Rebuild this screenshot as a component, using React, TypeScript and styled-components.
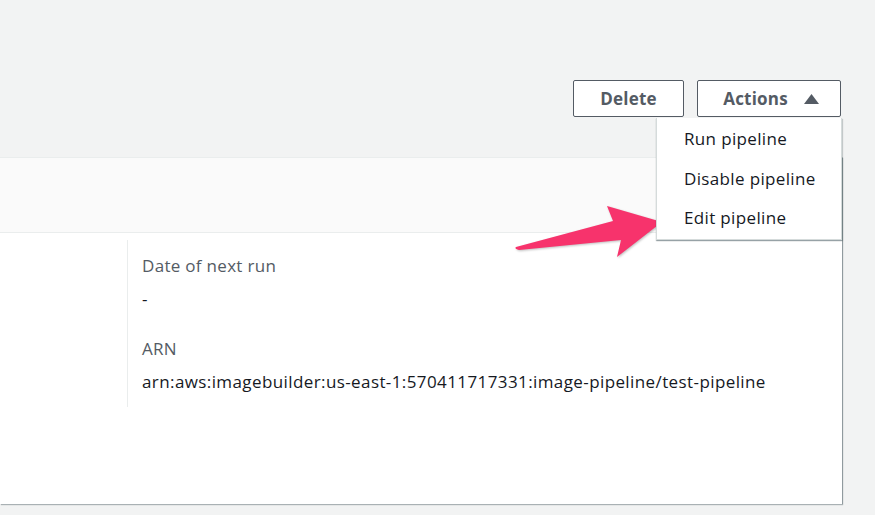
import React, { useState } from 'react';
import styled, { createGlobalStyle } from 'styled-components';

const GlobalStyle = createGlobalStyle`
  html, body {
    margin: 0;
    padding: 0;
    background: #f2f3f3;
    font-family: "Open Sans", "Noto Sans", Arial, sans-serif;
    color: #16191f;
    overflow: hidden;
  }
`;

const Page = styled.div`
  width: 875px;
  height: 515px;
  position: relative;
`;

const Toolbar = styled.div`
  height: 157px;
  display: flex;
  justify-content: flex-end;
  align-items: flex-start;
  gap: 13px;
  padding: 80px 34px 0 0;
  box-sizing: border-box;
`;

const Button = styled.button<{ $width: number; $shift?: number }>`
  height: 37px;
  width: ${(p) => p.$width}px;
  padding: 0 0 0 ${(p) => p.$shift ?? 0}px;
  display: flex;
  align-items: center;
  justify-content: center;
  gap: 16px;
  background: #ffffff;
  border: 1px solid #545b64;
  border-radius: 2px;
  color: #545b64;
  font-family: "Open Sans", "Noto Sans", Arial, sans-serif;
  font-size: 17px;
  font-weight: 700;
  letter-spacing: 0.2px;
  cursor: pointer;
`;

const ActionsWrap = styled.div`
  position: relative;
`;

const Caret = styled.svg`
  width: 15px;
  height: 10px;
  fill: #545b64;
`;

const Menu = styled.ul`
  position: absolute;
  top: 38px;
  right: -1px;
  width: 186px;
  box-sizing: border-box;
  margin: 0;
  padding: 1px 0 1px;
  list-style: none;
  background: #ffffff;
  border: 1px solid #d5dbdb;
  border-top: none;
  box-shadow: 0 1px 1px 0 rgba(0, 28, 36, 0.3), 1px 1px 1px 0 rgba(0, 28, 36, 0.15);
  z-index: 5;
`;

const MenuItem = styled.li`
  height: 39.5px;
  display: flex;
  align-items: center;
  padding-left: 27px;
  font-size: 17px;
  letter-spacing: 0.35px;
  color: #16191f;
  cursor: pointer;
`;

const Card = styled.section`
  margin-right: 33px;
  background: #ffffff;
  box-shadow: 1px 1px 1px 0 rgba(0, 28, 36, 0.3), 1px 0 0 0 rgba(0, 28, 36, 0.15);
`;

const CardHeader = styled.div`
  height: 76px;
  background: #fafafa;
  border-top: 1px solid #eaeded;
  border-bottom: 1px solid #eaeded;
  box-sizing: border-box;
`;

const CardBody = styled.div`
  display: grid;
  grid-template-columns: 127px 1fr;
  padding: 7px 0 97px;
  height: 271px;
  box-sizing: border-box;
`;

const Column = styled.div<{ $divider?: boolean }>`
  border-left: ${(p) => (p.$divider ? '1px solid #eaeded' : 'none')};
  padding: 14px 0 0 14px;
  display: flex;
  flex-direction: column;
  gap: 26px;
`;

const Field = styled.div`
  display: flex;
  flex-direction: column;
  gap: 9px;
`;

const Label = styled.div`
  font-size: 17px;
  line-height: 24px;
  letter-spacing: 0.3px;
  color: #545b64;
`;

const Value = styled.div`
  font-size: 17px;
  line-height: 24px;
  letter-spacing: 0.4px;
  color: #16191f;
  white-space: nowrap;
`;

const Arrow = styled.svg`
  position: absolute;
  left: 505px;
  top: 195px;
  width: 170px;
  height: 75px;
  pointer-events: none;
  filter: drop-shadow(1px 1px 1px rgba(0, 0, 0, 0.25));
`;

const fields = [
  { label: 'Date of next run', value: '-' },
  { label: 'ARN', value: 'arn:aws:imagebuilder:us-east-1:570411717331:image-pipeline/test-pipeline' },
];

const menuItems = ['Run pipeline', 'Disable pipeline', 'Edit pipeline'];

export default function App() {
  const [open, setOpen] = useState(true);

  return (
    <Page>
      <GlobalStyle />
      <Toolbar>
        <Button $width={111}>Delete</Button>
        <ActionsWrap>
          <Button $width={144} $shift={4} onClick={() => setOpen(!open)}>
            Actions
            <Caret viewBox="0 0 15 10">
              <path d="M7.5 0 L15 10 L0 10 Z" />
            </Caret>
          </Button>
          {open && (
            <Menu>
              {menuItems.map((item) => (
                <MenuItem key={item}>{item}</MenuItem>
              ))}
            </Menu>
          )}
        </ActionsWrap>
      </Toolbar>

      <Card>
        <CardHeader />
        <CardBody>
          <Column />
          <Column $divider>
            {fields.map((f) => (
              <Field key={f.label}>
                <Label>{f.label}</Label>
                <Value>{f.value}</Value>
              </Field>
            ))}
          </Column>
        </CardBody>
      </Card>

      <Arrow viewBox="505 195 170 75">
        <path
          d="M516 247 L613 221 L607 206 L662 222 L617 257 L621 240 L519 250 Q514 249 516 247 Z"
          fill="#f7336c"
        />
      </Arrow>
    </Page>
  );
}
